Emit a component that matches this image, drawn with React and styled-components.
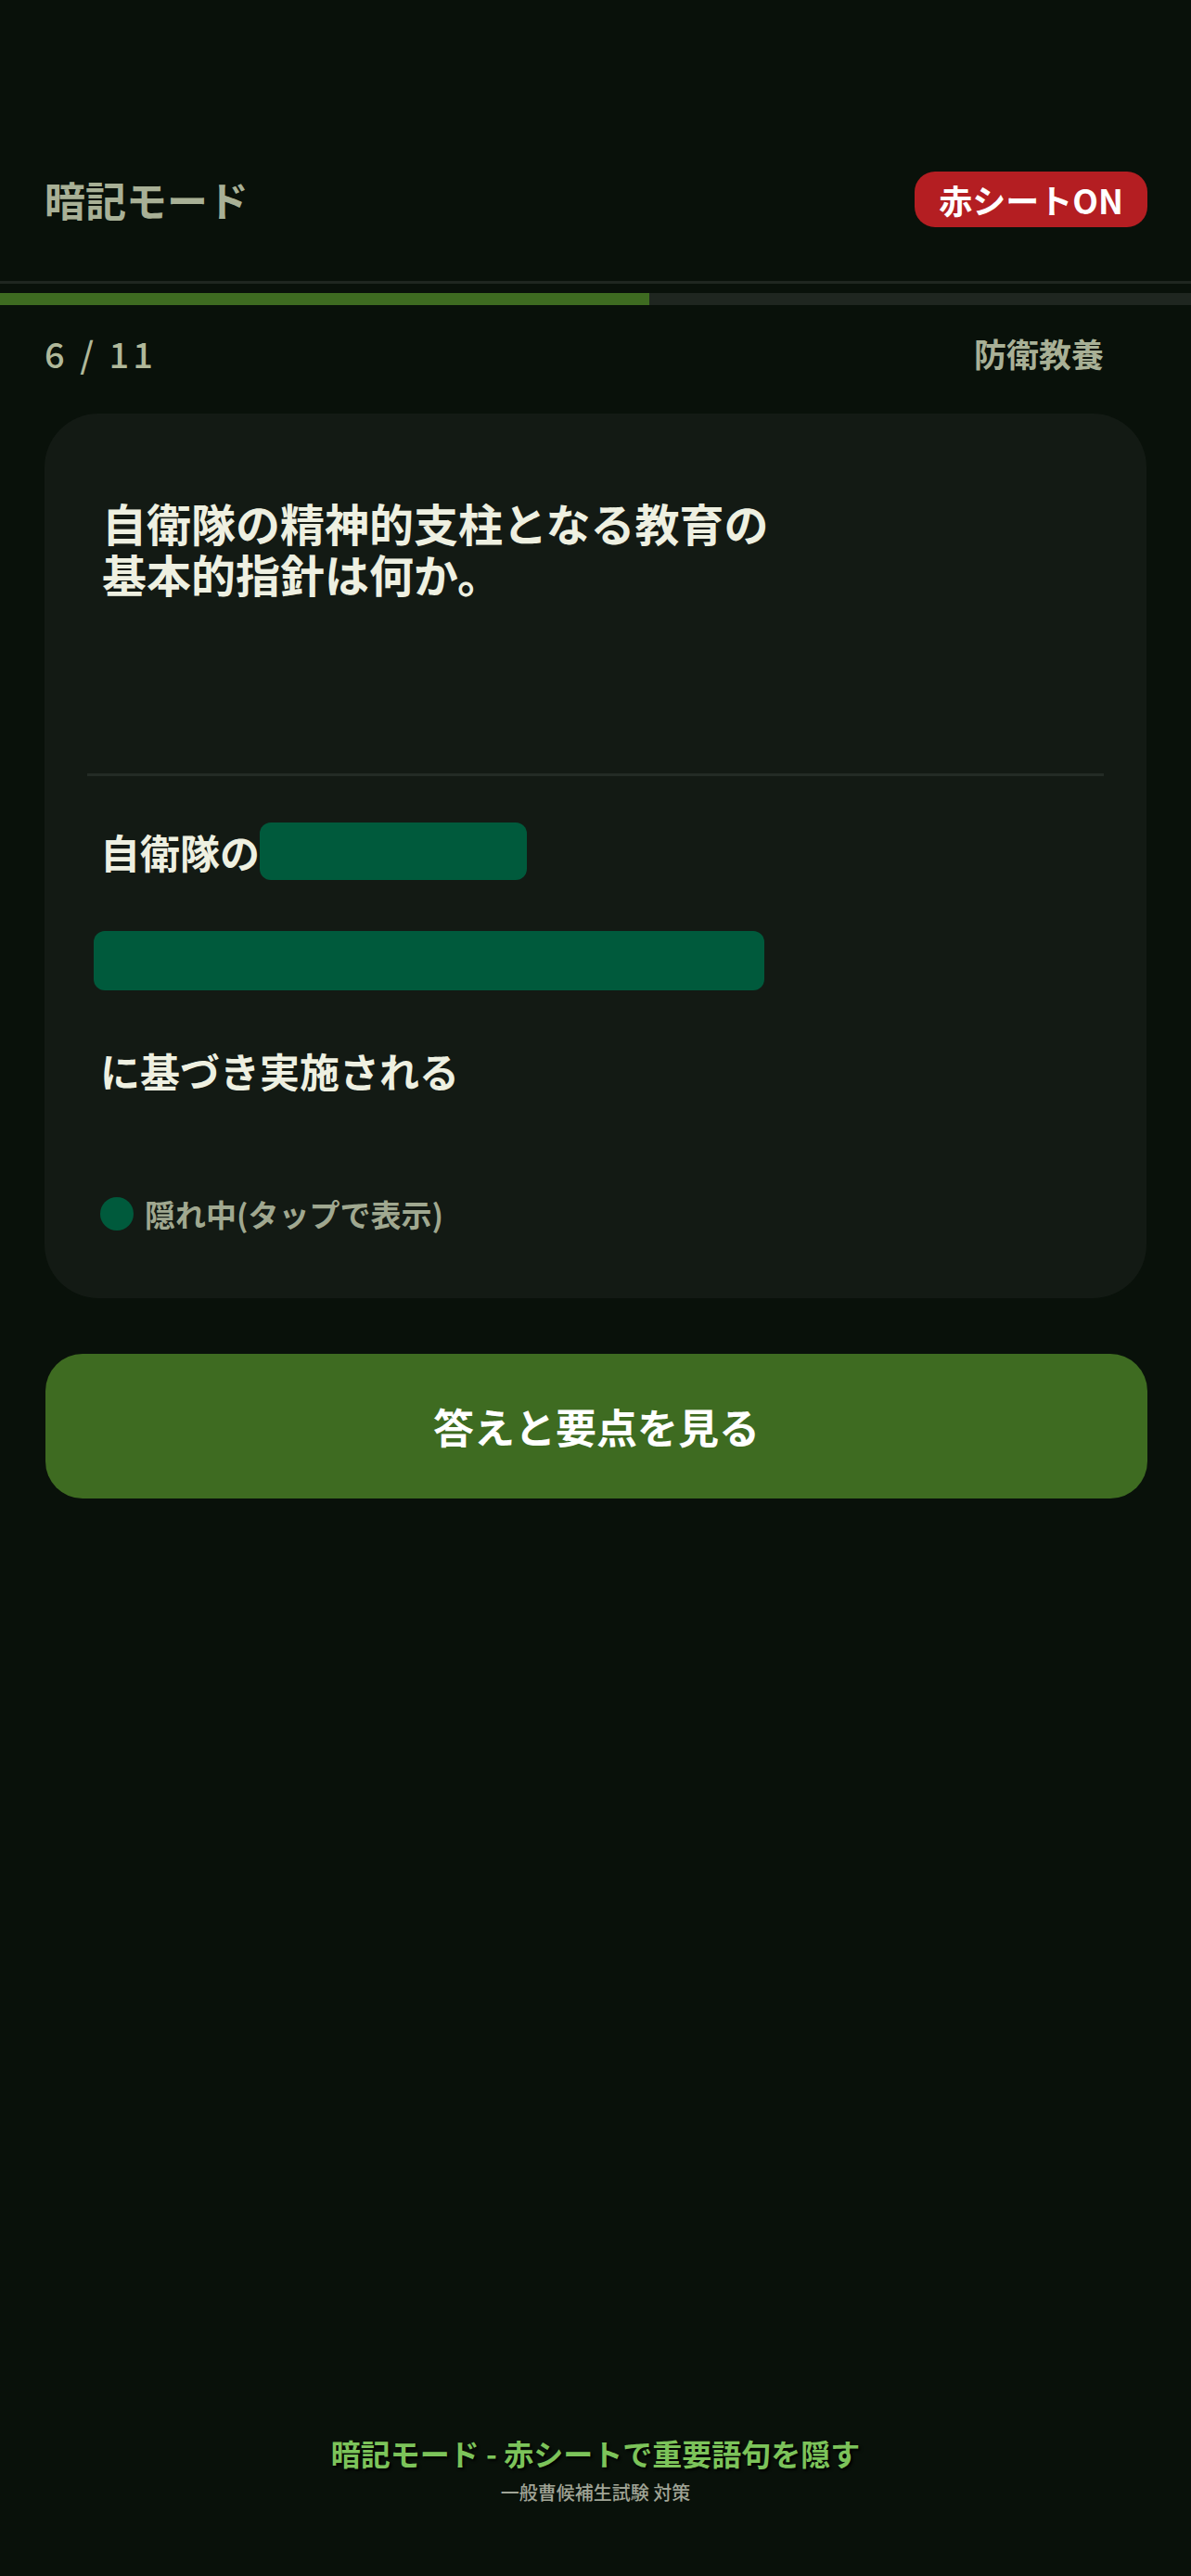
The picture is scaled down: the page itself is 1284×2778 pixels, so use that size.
import React from 'react'
import styled, { createGlobalStyle } from 'styled-components'

const GlobalStyle = createGlobalStyle`
  html, body {
    margin: 0;
    padding: 0;
    background: #09110a;
  }
  body {
    font-family: "Noto Sans CJK JP", "Noto Sans", sans-serif;
  }
`

const question = {
    index: 6,
    total: 11,
    category: '防衛教養',
    text: '自衛隊の精神的支柱となる教育の基本的指針は何か。',
}

function App() {
    const progress = (question.index / question.total) * 100

    return (
        <Page>
            <GlobalStyle />
            <Header>
                <Title>暗記モード</Title>
                <SheetBadge>赤シートON</SheetBadge>
            </Header>

            <ProgressTrack>
                <ProgressFill style={{ width: `${progress}%` }} />
            </ProgressTrack>

            <MetaRow>
                <Counter>{question.index} / {question.total}</Counter>
                <Category>{question.category}</Category>
            </MetaRow>

            <Card>
                <QuestionArea>
                    <QuestionText>{question.text}</QuestionText>
                </QuestionArea>
                <Divider />
                <AnswerArea>
                    <AnswerLine>
                        <AnswerText>自衛隊の</AnswerText>
                        <Mask $w={288} $h={62} />
                    </AnswerLine>
                    <AnswerLine>
                        <Mask $w={723} $h={64} $shift={-7} />
                    </AnswerLine>
                    <AnswerLine>
                        <AnswerText>に基づき実施される</AnswerText>
                    </AnswerLine>
                </AnswerArea>
                <HiddenHint>
                    <HintDot />
                    <HintText>隠れ中(タップで表示)</HintText>
                </HiddenHint>
            </Card>

            <RevealButton>答えと要点を見る</RevealButton>

            <Footer>
                <FooterTitle>暗記モード - 赤シートで重要語句を隠す</FooterTitle>
                <FooterSub>一般曹候補生試験 対策</FooterSub>
            </Footer>
        </Page>
    )
}

export default App

const Page = styled.div`
    min-height: 100vh;
    display: flex;
    flex-direction: column;
    background: #09110a;
`

const Header = styled.header`
    display: flex;
    justify-content: space-between;
    align-items: center;
    padding: 185px 47px 58px 48px;
    border-bottom: 3px solid #1f2620;
`

const Title = styled.h1`
    margin: 0;
    font-size: 44px;
    line-height: 56px;
    font-weight: 700;
    color: #a8b096;
`

const SheetBadge = styled.div`
    height: 60px;
    padding: 0 26px;
    display: flex;
    align-items: center;
    border-radius: 22px;
    background: #b41e22;
    color: #ffffff;
    font-size: 36px;
    font-weight: 700;
`

const ProgressTrack = styled.div`
    margin-top: 10px;
    height: 13px;
    background: #1f2620;
`

const ProgressFill = styled.div`
    height: 100%;
    background: #3e6b21;
`

const MetaRow = styled.div`
    margin-top: 26px;
    height: 50px;
    display: flex;
    justify-content: space-between;
    align-items: center;
    padding: 0 94px 0 48px;
`

const Counter = styled.span`
    font-size: 38px;
    font-weight: 500;
    letter-spacing: 4px;
    color: #b0b89a;
`

const Category = styled.span`
    font-size: 35px;
    font-weight: 700;
    color: #a8b096;
`

const Card = styled.section`
    margin: 41px 48px 0;
    padding: 90px 46px 67px;
    border-radius: 58px;
    background: #131a14;
`

const QuestionArea = styled.div`
    min-height: 298px;
    padding: 0 16px;
`

const QuestionText = styled.p`
    margin: 0;
    max-width: 740px;
    font-size: 48px;
    line-height: 55px;
    font-weight: 700;
    color: #eef0e1;
`

const Divider = styled.div`
    height: 3px;
    background: #232b25;
`

const AnswerArea = styled.div`
    margin-top: 50px;
    padding: 0 14px;
    display: flex;
    flex-direction: column;
    gap: 55px;
`

const AnswerLine = styled.div`
    display: flex;
    align-items: center;
    min-height: 62px;
`

const AnswerText = styled.span`
    font-size: 43px;
    line-height: 62px;
    font-weight: 700;
    color: #eef0e1;
`

const Mask = styled.span`
    display: block;
    width: ${p => p.$w}px;
    height: ${p => p.$h}px;
    margin-left: ${p => p.$shift || 0}px;
    border-radius: 12px;
    background: #005a3c;
`

const HiddenHint = styled.div`
    margin-top: 100px;
    padding-left: 14px;
    display: flex;
    align-items: center;
    gap: 12px;
`

const HintDot = styled.span`
    width: 36px;
    height: 36px;
    border-radius: 50%;
    background: #005a3c;
`

const HintText = styled.span`
    font-size: 33px;
    font-weight: 700;
    color: #a0a890;
`

const RevealButton = styled.button`
    margin: 60px 47px 0 49px;
    height: 156px;
    border: none;
    border-radius: 40px;
    background: #3e6b21;
    color: #ffffff;
    font-family: inherit;
    font-size: 44px;
    font-weight: 700;
    cursor: pointer;
`

const Footer = styled.footer`
    margin-top: auto;
    padding-bottom: 76px;
    display: flex;
    flex-direction: column;
    align-items: center;
    gap: 7px;
`

const FooterTitle = styled.div`
    font-size: 32px;
    line-height: 44px;
    font-weight: 700;
    color: #7cc35a;
    text-shadow: 2px 2px 3px #000000;
`

const FooterSub = styled.div`
    font-size: 20px;
    line-height: 28px;
    font-weight: 500;
    color: #a0a496;
`
